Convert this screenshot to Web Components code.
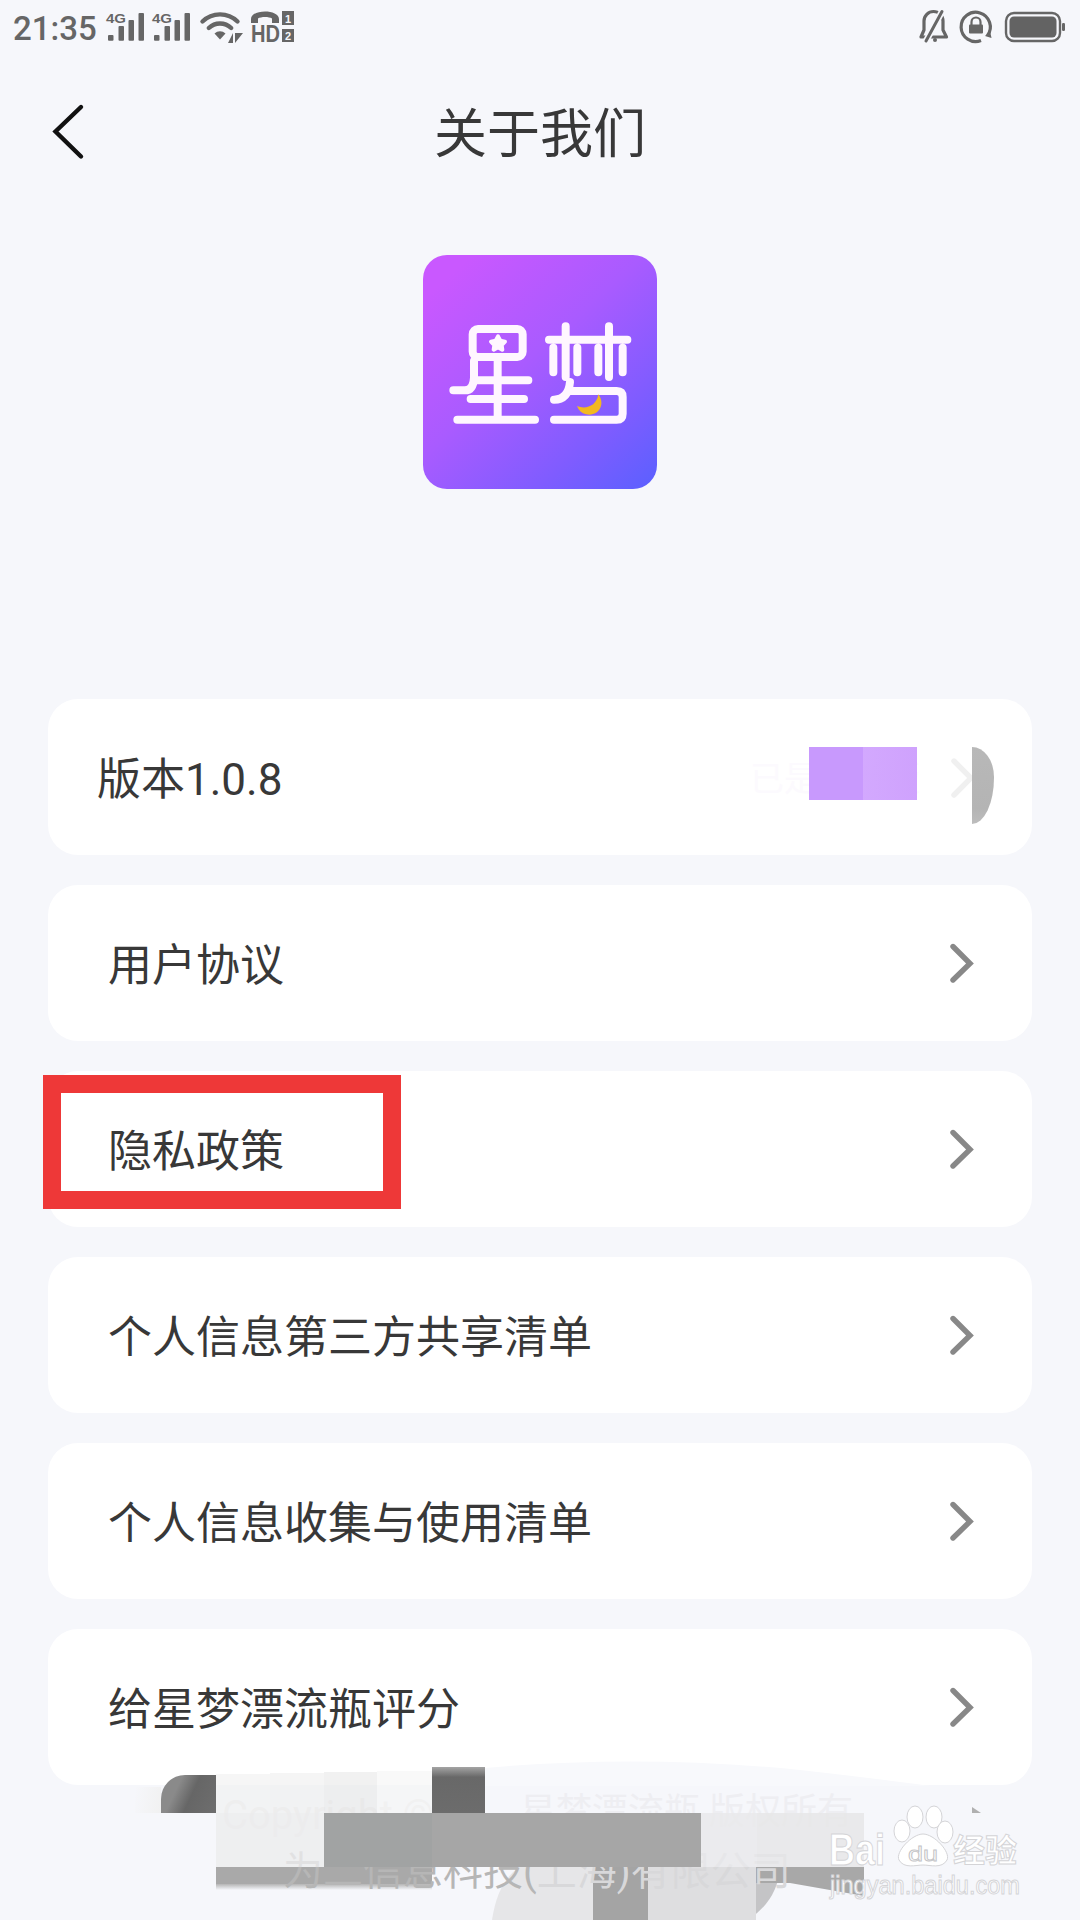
<!DOCTYPE html>
<html lang="zh">
<head>
<meta charset="utf-8">
<title>关于我们</title>
<style>
  html, body { margin: 0; padding: 0; }
  body {
    width: 1080px;
    height: 1920px;
    overflow: hidden;
    position: relative;
    background: #f6f7fb;
    font-family: Roboto, "Noto Sans CJK SC", sans-serif;
    color: #333;
  }
  .list { display: flex; flex-direction: column; gap: 30px; padding: 0 48px; }
</style>
</head>
<body>
<status-bar></status-bar>
<nav-bar>关于我们</nav-bar>
<app-logo></app-logo>
<div class="list">
  <menu-row inset="49"><span>版本1.0.8</span><version-smudge slot="extra"></version-smudge></menu-row>
  <menu-row>用户协议</menu-row>
  <menu-row marked>隐私政策</menu-row>
  <menu-row>个人信息第三方共享清单</menu-row>
  <menu-row>个人信息收集与使用清单</menu-row>
  <menu-row>给星梦漂流瓶评分</menu-row>
</div>
<footer-mosaic></footer-mosaic>
<baidu-mark></baidu-mark>

<script>
class StatusBar extends HTMLElement{
    constructor(){
        super();
        this.shadowDOM = this.attachShadow({mode: 'open'})
    };
    connectedCallback(){
        this.shadowDOM.innerHTML = `
        <style>
            :host{
                display: flex;
                justify-content: space-between;
                height: 55px;
                padding: 0 13px;
                color: #666;
            }
            .left{ display: flex; }
            .time{
                font: 500 33px/55px Roboto, sans-serif;
                width: 87px;
                padding-top: 1px;
            }
            svg{ display: block; }
        </style>
        <div class="left">
          <span class="time">21:35</span>
          <svg width="200" height="55" viewBox="100 0 200 55" fill="#666">
            <g>
              <text x="106" y="23" font-family="Liberation Sans" font-weight="700" font-size="12.5" textLength="20" lengthAdjust="spacingAndGlyphs">4G</text>
              <rect x="108" y="35" width="5.500" height="5.800" rx="1"/>
              <rect x="118.500" y="26" width="5.500" height="14.800" rx="1"/>
              <rect x="128.500" y="20" width="5.500" height="20.800" rx="1"/>
              <rect x="138.500" y="13" width="5.500" height="27.800" rx="1"/>
            </g>
            <g>
              <text x="152" y="23" font-family="Liberation Sans" font-weight="700" font-size="12.5" textLength="20" lengthAdjust="spacingAndGlyphs">4G</text>
              <rect x="154" y="35" width="5.500" height="5.800" rx="1"/>
              <rect x="164.500" y="26" width="5.500" height="14.800" rx="1"/>
              <rect x="174.500" y="20" width="5.500" height="20.800" rx="1"/>
              <rect x="184.500" y="13" width="5.500" height="27.800" rx="1"/>
            </g>
            <path d="M202.500 21.500a25 25 0 0 1 35 0M208.800 28a16 16 0 0 1 22.400 0" fill="none" stroke="#666" stroke-width="4.400" stroke-linecap="round"/>
            <path d="M214.500 33.500a8 8 0 0 1 11 0L220 39.500z"/>
            <path d="M228 43h5V33zM235 33h8l-8 10z"/>
            <path d="M251 23v-4c0-10 28-10 28 0v4h-7v-4.500c-3-2-11-2-14 0V23z"/>
            <text x="251" y="42" font-family="Liberation Sans" font-weight="700" font-size="23" textLength="29" lengthAdjust="spacingAndGlyphs">HD</text>
            <rect x="282" y="11" width="12" height="14"/>
            <rect x="282" y="29" width="12" height="13"/>
            <text x="288" y="23" font-family="Liberation Sans" font-weight="700" font-size="11" text-anchor="middle" fill="#f6f7fb">1</text>
            <text x="288" y="40" font-family="Liberation Sans" font-weight="700" font-size="11" text-anchor="middle" fill="#f6f7fb">2</text>
          </svg>
        </div>
        <svg width="152" height="55" viewBox="915 0 152 55" fill="#666">
          <path d="M921 37l3-7v-9a9.500 9.500 0 0 1 19 0v9l3.500 7z" fill="none" stroke="#666" stroke-width="3.200" stroke-linejoin="round"/>
          <path d="M942 11.500 926 41" stroke="#f6f7fb" stroke-width="6.500" fill="none"/>
          <path d="M942 11.500 926 41" stroke="#666" stroke-width="3" fill="none" stroke-linecap="round"/>
          <circle cx="935" cy="40" r="2"/>
          <path d="M987.500 35.500A14.600 14.600 0 1 0 981 40.500" fill="none" stroke="#666" stroke-width="3.200"/>
          <path d="M990 31l1.500 7-6.500-2z"/>
          <rect x="969" y="24.500" width="14" height="9" rx="1"/>
          <path d="M971.500 25v-3a4.500 4.500 0 0 1 9 0v3" fill="none" stroke="#666" stroke-width="2.200"/>
          <rect x="1006" y="13" width="54" height="28" rx="8" fill="none" stroke="#666" stroke-width="2.400"/>
          <rect x="1009.500" y="16.500" width="47" height="21" rx="4.500" fill="#636363"/>
          <rect x="1062" y="23" width="3" height="8" rx="1.200"/>
        </svg>
        `;
    };
};

class NavBar extends HTMLElement{
    constructor(){
        super();
        this.shadowDOM = this.attachShadow({mode: 'open'})
    };
    connectedCallback(){
        this.shadowDOM.innerHTML = `
        <style>
            :host{
                display: grid;
                grid-template-columns: 120px 1fr 120px;
                align-items: center;
                height: 154px;
                font: 400 53px "Noto Sans CJK SC", sans-serif;
                color: #383838;
            }
            svg{ display: block; margin-left: 50px; }
            .title{ text-align: center; padding-bottom: 4px; }
        </style>
        <svg width="36" height="58" viewBox="50 100 36 58">
          <path d="M81 104 55.500 128.500 81 153.500" fill="none" stroke="#111" stroke-width="4.400" stroke-linecap="round" stroke-linejoin="miter"/>
        </svg>
        <div class="title"><slot></slot></div>
        <span></span>
        `;
    };
};

class AppLogo extends HTMLElement{
    constructor(){
        super();
        this.shadowDOM = this.attachShadow({mode: 'open'})
    };
    connectedCallback(){
        this.shadowDOM.innerHTML = `
        <style>
            :host{
                display: block;
                width: 234px;
                height: 234px;
                margin: 46px auto 210px;
                border-radius: 24px;
                overflow: hidden;
                background: linear-gradient(138deg, #c958ff 10%, #a95bff 45%, #7f5cff 76%, #5a60ff 100%);
            }
            svg{ display: block; }
        </style>
        <svg width="234" height="234" viewBox="69 44 702 702" role="img" aria-label="星梦">
          <g fill="none" stroke="#fff6ff" stroke-width="24" stroke-linecap="round" stroke-linejoin="round">
            <rect x="218" y="266" width="150" height="84" rx="16"/>
            <path d="M293 362V538M222 362V412Q220 450 195 450H160M222 420H385M212 476H372M172 538H405"/>
            <path d="M447 298H682M497 258V410M627 258V410M460 322V396M532 322V396M595 322V396M668 322V396"/>
            <path d="M510 425Q505 478 462 478M505 452H650Q668 452 668 470V520Q668 538 650 538H462"/>
          </g>
          <path d="M294 288l7 13 14 3-10 10 2 14-13-7-13 7 2-14-10-10 14-3z" fill="#fff6ff" stroke="#fff6ff" stroke-width="12" stroke-linejoin="round"/>
          <path d="M595 462C618 492 596 530 558 522C545 519 536 510 531 497C556 508 590 498 595 462z" fill="#f3b81f"/>
        </svg>
        `;
    };
};

class MenuRow extends HTMLElement{
    constructor(){
        super();
        this.shadowDOM = this.attachShadow({mode: 'open'})
    };
    connectedCallback(){
        const inset = this.getAttribute('inset') || 60;
        const mark = this.hasAttribute('marked') ? '<div class="mark"></div>' : '';
        this.shadowDOM.innerHTML = `
        <style>
            :host{
                display: flex;
                align-items: center;
                justify-content: space-between;
                position: relative;
                height: 156px;
                padding: 0 58px 0 ${inset}px;
                background: #fff;
                border-radius: 30px;
                font: 400 44px Roboto, "Noto Sans CJK SC", sans-serif;
                color: #383838;
            }
            .label{ padding-bottom: 2px; }
            svg{ display: block; }
            .mark{
                position: absolute;
                left: -5px;
                top: 4px;
                width: 322px;
                height: 98px;
                border: 18px solid #ee3838;
            }
        </style>
        <div class="label"><slot></slot></div>
        <svg width="24" height="40" viewBox="0 0 24 40">
          <path d="M3 3.500 20 20.500 3 37" fill="none" stroke="#888" stroke-width="5.400" stroke-linecap="round" stroke-linejoin="miter"/>
        </svg>
        <slot name="extra"></slot>
        ${mark}
        `;
    };
};

// smudges over the right side of the version row
class VersionSmudge extends HTMLElement{
    constructor(){
        super();
        this.shadowDOM = this.attachShadow({mode: 'open'})
    };
    connectedCallback(){
        this.shadowDOM.innerHTML = `
        <style>
            :host{
                position: absolute;
                inset: 0;
                display: block;
                font: 400 34px "Noto Sans CJK SC", sans-serif;
                color: #fcfafe;
            }
            .wipe{ position: absolute; left: 880px; top: 40px; width: 44px; height: 80px; background: #fff; }
            .txt{ position: absolute; left: 702px; top: 53px; white-space: nowrap; }
            .cover{ position: absolute; left: 761px; top: 48px; width: 54px; height: 53px; background: rgba(198, 149, 253, .96); }
            .cover.b{ left: 815px; width: 54px; background: linear-gradient(90deg, rgba(209, 165, 254, .96), rgba(205, 158, 253, .96)); }
            .moon{
                position: absolute;
                left: 924px;
                top: 48px;
                width: 22px;
                height: 77px;
                background: linear-gradient(#b8b8b8, #b4b4b4 80%, #bdbdbd);
                border-radius: 0 22px 22px 0 / 0 30px 46px 0;
            }
            svg{ position: absolute; left: 903px; top: 48px; }
        </style>
        <div class="wipe"></div>
        <div class="txt">已是最新版</div>
        <div class="cover"></div>
        <div class="cover b"></div>
        <svg width="22" height="60" viewBox="0 0 22 60"><path d="M3 14 20 31 3 48" fill="none" stroke="#f0f0f0" stroke-width="5.400" stroke-linecap="round"/></svg>
        <div class="moon"></div>
        `;
    };
};

// the pixelated footer, each block is left, top, width, height, background, radius
const LOWER_BLOCKS = [
    [216, 1867, 216, 17, '#a9a9a9'],
    [216, 1884, 216, 6, 'linear-gradient(#b5b5b5, #f6f7fb)'],
    [593, 1867, 55, 53, '#a4a4a4'],
    [648, 1867, 108, 53, '#dedee0'],
    [756, 1867, 108, 16, '#a8a8a8'],
];
const UPPER_BLOCKS = [
    [135, 1787, 26, 26, 'linear-gradient(100deg, #f6f7fb, #f1f1f1)'],
    [161, 1775, 55, 38, 'linear-gradient(115deg, #8a8a8a 30%, #666 55%, #6e6e6e)', '24px 0 0 0'],
    [216, 1774, 54, 39, 'rgba(240, 240, 240, .6)'],
    [270, 1773, 54, 40, 'rgba(238, 238, 238, .6)'],
    [324, 1772, 53, 41, 'rgba(232, 232, 232, .6)'],
    [377, 1771, 55, 42, 'rgba(245, 245, 245, .6)'],
    [432, 1767, 53, 46, 'linear-gradient(#a4a4a4, #686868 22%, #6c6c6c)'],
    [216, 1813, 108, 54, 'rgba(236, 236, 238, .8)'],
    [324, 1813, 108, 54, '#a1a3a3'],
    [432, 1813, 269, 54, '#a6a6a6'],
    [701, 1813, 56, 54, 'rgba(233, 233, 235, .85)'],
    [757, 1813, 107, 54, 'rgba(230, 230, 232, .85)'],
];
const cellsOf = list => list.map(b =>
    `<i style="left:${b[0]}px;top:${b[1]}px;width:${b[2]}px;height:${b[3]}px;background:${b[4]};border-radius:${b[5] || 0}"></i>`
).join('');

class FooterMosaic extends HTMLElement{
    constructor(){
        super();
        this.shadowDOM = this.attachShadow({mode: 'open'})
    };
    connectedCallback(){
        this.shadowDOM.innerHTML = `
        <style>
            :host{
                position: absolute;
                inset: 0;
                display: block;
                pointer-events: none;
            }
            i{ position: absolute; display: block; }
            svg{ position: absolute; left: 0; top: 0; }
            .t{
                position: absolute;
                white-space: nowrap;
                font: 400 40px/52px Roboto, "Noto Sans CJK SC", sans-serif;
            }
        </style>
        <svg width="1080" height="1920" viewBox="0 0 1080 1920">
          <path d="M485 1786V1768Q640 1754 800 1770Q880 1779 930 1786z" fill="#f8f9fc"/>
          <path d="M492 1920Q498 1880 520 1867H593V1920z" fill="#e6e6e8"/>
          <path d="M756 1867h24Q778 1900 748 1920h-4z" fill="#c4c4c6"/>
          <path d="M864 1867Q840 1880 790 1883Q830 1890 864 1896z" fill="#a8a8a8"/>
          <path d="M972 1807v6h9z" fill="#b0b0b0"/>
        </svg>
        ${cellsOf(LOWER_BLOCKS)}
        <div class="t" style="left:283px;top:1846px;color:#b6b6b6">为二信息科技(<span style="color:#d8d8da">上海)有限公司</span></div>
        <div class="t" style="left:222px;top:1790px;color:#eaeaec">Copyright ©</div>
        <div class="t" style="left:520px;top:1786px;font-size:36px;color:#eeeef2">星梦漂流瓶 版权所有</div>
        ${cellsOf(UPPER_BLOCKS)}
        `;
    };
};

class BaiduMark extends HTMLElement{
    constructor(){
        super();
        this.shadowDOM = this.attachShadow({mode: 'open'})
    };
    connectedCallback(){
        this.shadowDOM.innerHTML = `
        <style>
            :host{
                position: absolute;
                left: 820px;
                top: 1805px;
                width: 240px;
                height: 110px;
                display: block;
            }
            svg{ display: block; }
        </style>
        <svg width="240" height="110" viewBox="820 1805 240 110">
          <g fill="#fff" stroke="#d4d4d7" stroke-width="1">
            <text x="829" y="1865" font-family="Liberation Sans" font-weight="700" font-size="44" textLength="56" lengthAdjust="spacingAndGlyphs">Bai</text>
            <ellipse cx="915" cy="1817" rx="8" ry="11"/>
            <ellipse cx="934" cy="1817" rx="8" ry="11"/>
            <ellipse cx="902" cy="1831" rx="8" ry="11"/>
            <ellipse cx="945" cy="1832" rx="8" ry="11"/>
            <path d="M923 1834C934 1834 951 1852 947 1860C942 1869 930 1865 923 1865C916 1865 904 1869 899 1860C895 1852 912 1834 923 1834z"/>
            <text x="953" y="1862" font-family="Noto Sans CJK SC" font-weight="700" font-size="32">经验</text>
            <text x="830" y="1894" font-family="Liberation Sans" font-size="25" textLength="190" lengthAdjust="spacingAndGlyphs">jingyan.baidu.com</text>
          </g>
          <text x="908" y="1861" font-family="Liberation Sans" font-size="20" fill="#fff" stroke="#c4c4c7" stroke-width=".8" textLength="30" lengthAdjust="spacingAndGlyphs">du</text>
        </svg>
        `;
    };
};

customElements.define('status-bar', StatusBar);
customElements.define('nav-bar', NavBar);
customElements.define('app-logo', AppLogo);
customElements.define('menu-row', MenuRow);
customElements.define('version-smudge', VersionSmudge);
customElements.define('footer-mosaic', FooterMosaic);
customElements.define('baidu-mark', BaiduMark);
</script>
</body>
</html>
